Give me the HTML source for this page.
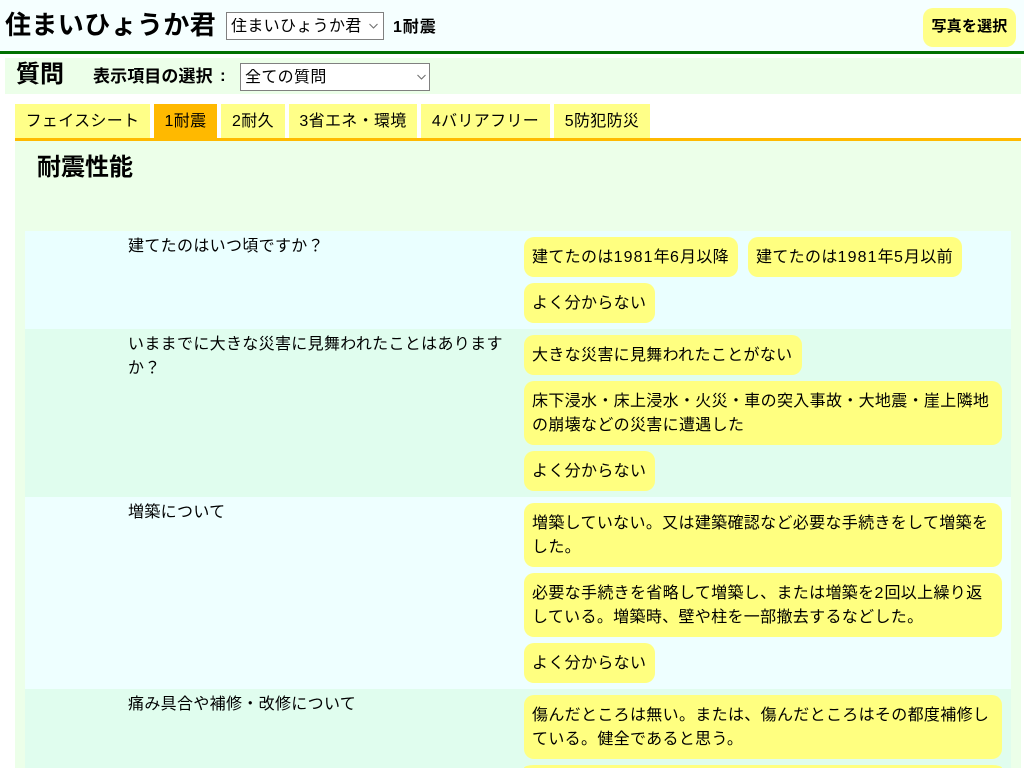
<!DOCTYPE html>
<html lang="ja"><head><meta charset="utf-8"><title>住まいひょうか君</title>
<style>
html,body{margin:0;padding:0;width:1024px;height:768px;overflow:hidden;background:#fff}
body{position:relative;font-family:"Liberation Sans","Noto Sans CJK JP",sans-serif;font-size:16px;color:#000;letter-spacing:.33px}
.a{position:absolute;white-space:nowrap}
.tab{position:absolute;top:104px;height:34px;line-height:36px;background:#ffff88;text-align:center;white-space:nowrap}
.btn{position:absolute;left:524px;background:#ffff80;border-radius:10px;padding:9px 0 7px 8px;box-sizing:border-box;line-height:24px;height:40px;white-space:nowrap}
.btn.w{width:478px;height:64px}
.row{position:absolute;left:25px;width:986px}
.q{position:absolute;left:128px;line-height:24px;white-space:nowrap}
.d{letter-spacing:1.1px}
select{position:absolute;-webkit-appearance:none;appearance:none;font-family:inherit;font-size:16px;letter-spacing:.33px;background:#fff;border:1px solid #808080;outline:0;padding:0 0 0 4px;margin:0;border-radius:0;color:#000;box-sizing:border-box}
svg{position:absolute}
</style></head>
<body>
<div class="a" style="left:0;top:0;width:1024px;height:51px;background:#f5ffff"></div>
<div class="a" style="left:0;top:51px;width:1024px;height:3px;background:#007000"></div>
<div class="a" style="left:5px;top:8px;font-size:26px;letter-spacing:.4px;font-weight:bold;line-height:34px">住まいひょうか君</div>
<select style="left:226px;top:12px;width:158px;height:28px"><option>住まいひょうか君</option></select>
<svg style="left:369px;top:23px" width="9" height="6" viewBox="0 0 9 6"><path d="M.5 1 4.5 5 8.5 1" fill="none" stroke="#707070" stroke-width="1.1"/></svg>
<div class="a" style="left:393px;top:15px;font-weight:bold;line-height:24px;padding-top:1px;letter-spacing:.9px">1耐震</div>
<div class="a" style="left:923px;top:8px;width:93px;height:39px;background:#ffff88;border-radius:10px;text-align:center;font-weight:bold;font-size:15px;letter-spacing:.2px;line-height:38px">写真を選択</div>

<div class="a" style="left:5px;top:58px;width:1016px;height:36px;background:#ecffe9"></div>
<div class="a" style="left:16px;top:59px;font-size:24px;letter-spacing:0;font-weight:bold;line-height:32px">質問</div>
<div class="a" style="left:93px;top:65px;font-size:17px;letter-spacing:.1px;font-weight:bold;line-height:24px">表示項目の選択</div>
<div class="a" style="left:220px;top:64px;font-size:17px;font-weight:bold;line-height:24px">:</div>
<select style="left:240px;top:63px;width:190px;height:28px"><option>全ての質問</option></select>
<svg style="left:417px;top:74px" width="9" height="6" viewBox="0 0 9 6"><path d="M.5 1 4.5 5 8.5 1" fill="none" stroke="#707070" stroke-width="1.1"/></svg>

<div class="tab" style="left:15px;width:135px">フェイスシート</div>
<div class="tab" style="left:154px;width:63px;background:#ffb900">1耐震</div>
<div class="tab" style="left:221px;width:64px">2耐久</div>
<div class="tab" style="left:289px;width:128px">3省エネ・環境</div>
<div class="tab" style="left:421px;width:129px">4バリアフリー</div>
<div class="tab" style="left:554px;width:96px">5防犯防災</div>
<div class="a" style="left:15px;top:138px;width:1006px;height:3px;background:#ffb900"></div>

<div class="a" style="left:15px;top:141px;width:1006px;height:627px;background:#ecffe9"></div>
<div class="a" style="left:37px;top:152px;font-size:24px;letter-spacing:0;font-weight:bold;line-height:32px">耐震性能</div>

<div class="row" style="top:231px;height:98px;background:#eaffff"></div>
<div class="row" style="top:329px;height:168px;background:#e0fdee"></div>
<div class="row" style="top:497px;height:192px;background:#eeffff"></div>
<div class="row" style="top:689px;height:79px;background:#e0fdee"></div>

<div class="q" style="top:235px">建てたのはいつ頃ですか？</div>
<div class="q" style="top:333px">いままでに大きな災害に見舞われたことはあります<br>か？</div>
<div class="q" style="top:501px">増築について</div>
<div class="q" style="top:693px">痛み具合や補修・改修について</div>

<div class="btn" style="top:237px;width:214px">建てたのは<span class="d">1981</span>年<span class="d">6</span>月以降</div>
<div class="btn" style="top:237px;left:748px;width:214px">建てたのは<span class="d">1981</span>年<span class="d">5</span>月以前</div>
<div class="btn" style="top:283px;width:131px">よく分からない</div>

<div class="btn" style="top:335px;width:278px">大きな災害に見舞われたことがない</div>
<div class="btn w" style="top:381px">床下浸水・床上浸水・火災・車の突入事故・大地震・崖上隣地<br>の崩壊などの災害に遭遇した</div>
<div class="btn" style="top:451px;width:131px">よく分からない</div>

<div class="btn w" style="top:503px">増築していない。又は建築確認など必要な手続きをして増築を<br>した。</div>
<div class="btn w" style="top:573px">必要な手続きを省略して増築し、または増築を<span class="d">2</span>回以上繰り返<br>している。増築時、壁や柱を一部撤去するなどした。</div>
<div class="btn" style="top:643px;width:131px">よく分からない</div>

<div class="btn w" style="top:695px">傷んだところは無い。または、傷んだところはその都度補修し<br>ている。健全であると思う。</div>
<div class="a" style="left:524px;top:765px;width:478px;height:3px;background:#ffff80;border-radius:10px 10px 0 0 / 3px 3px 0 0"></div>
</body></html>
